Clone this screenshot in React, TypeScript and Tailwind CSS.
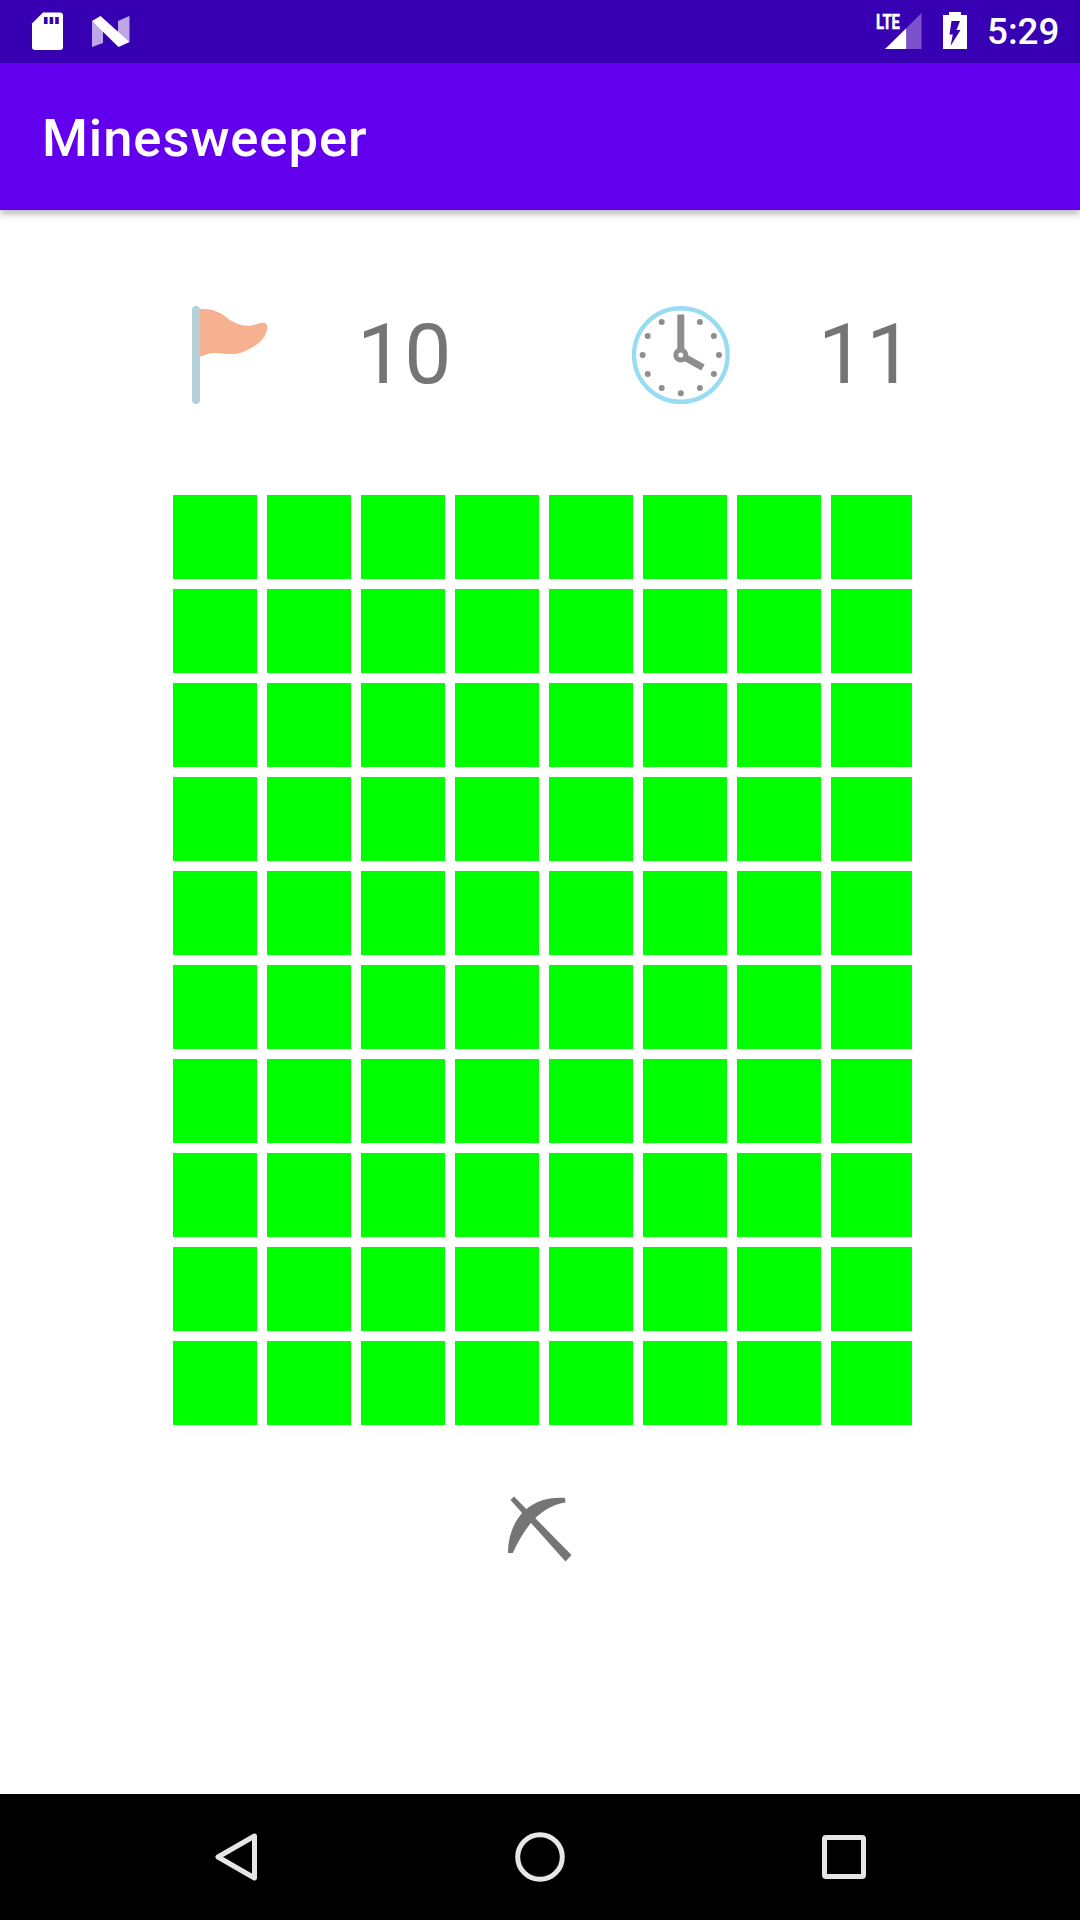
const rows = Array.from({ length: 10 });
const cols = Array.from({ length: 8 });

function Clock() {
  const dots = Array.from({ length: 12 }, (_, i) => i).filter((i) => i !== 0);
  return (
    <svg width="98" height="98" viewBox="632 306 98 98" className="block">
      <circle cx="680.8" cy="355" r="46.8" fill="none" stroke="#97dcf3" strokeWidth="4.4" />
      {dots.map((i) => {
        const a = (i * Math.PI) / 6;
        return <circle key={i} cx={680.8 + 38.2 * Math.sin(a)} cy={355 - 38.2 * Math.cos(a)} r="3" fill="#8e8e8e" />;
      })}
      <rect x="677.3" y="314.5" width="7" height="35" fill="#8e8e8e" />
      <path d="M685 357.5 L703 367.5" stroke="#8e8e8e" strokeWidth="7" />
      <circle cx="680.8" cy="355" r="5" fill="#fff" stroke="#8e8e8e" strokeWidth="5" />
    </svg>
  );
}

export default function App() {
  return (
    <div className="w-[1080px] h-[1920px] bg-white flex flex-col overflow-hidden font-['Roboto',sans-serif]">
      <div className="h-[63px] bg-[#3700b3] flex items-start shrink-0">
        <svg width="1080" height="63" viewBox="0 0 1080 63" className="block shrink-0">
          <path d="M43 12.5H60a3 3 0 0 1 3 3V47a3 3 0 0 1-3 3H35a3 3 0 0 1-3-3V23.5Z" fill="#fff" />
          <rect x="44" y="17" width="3.6" height="7" fill="#3700b3" />
          <rect x="49.6" y="17" width="3.6" height="7" fill="#3700b3" />
          <rect x="55.2" y="17" width="3.6" height="7" fill="#3700b3" />
          <path d="M92 21V47L103 43V30Z" fill="#bca6e6" />
          <path d="M118 21L129.5 16V42L118 36Z" fill="#bca6e6" />
          <path d="M92 21L100.5 16L129.5 42L118.5 47Z" fill="#fff" />
          <text x="876" y="29" fontFamily="Roboto" fontWeight="700" fontSize="20" fill="#fff" stroke="#fff" strokeWidth="0.5" textLength="24" lengthAdjust="spacingAndGlyphs">LTE</text>
          <path d="M885 49H906.5V28Z" fill="#fff" />
          <path d="M906.5 28L921.5 13V49H906.5Z" fill="#7c52cc" />
          <path d="M949 12H961V15H967V49H943V15H949Z" fill="#fff" />
          <path d="M951.5 21H960L956.5 30H960.5L950.5 46L952.8 34.5H949.5Z" fill="#3700b3" />
        </svg>
        <span className="-ml-[93px] text-[36.75px] leading-[63px] font-medium text-white whitespace-nowrap">5:29</span>
      </div>

      <div className="h-[147px] bg-[#6200ee] flex items-center pl-[42px] pt-[4px] shrink-0 shadow-[0_4px_7px_rgba(0,0,0,0.28)] z-10">
        <span className="text-[52.5px] tracking-[0.018em] leading-none font-medium text-white">Minesweeper</span>
      </div>

      <div className="flex items-center h-[98px] mt-[96px] pl-[190px] shrink-0">
        <svg width="80" height="98" viewBox="190 306 80 98" className="block shrink-0">
          <path d="M200 309C207 309 212 309.5 217 311.7C224 314.5 228 319 233 321.7C239 325 245 326 250 325.7C255 325 259 322.7 263 322.7C266.5 322.7 268 325 267.3 329C266 337 260 343 253 346.7C247 350.5 240 354 233 354C226 354.5 219 352.5 213 353C208 353.5 204 355 200 356.8Z" fill="#f6b190" />
          <rect x="192" y="306" width="8" height="98" rx="4" fill="#b6d0d8" />
        </svg>
        <span className="w-[362px] pl-[87px] text-[84px] leading-none text-[#757575] shrink-0">10</span>
        <div className="shrink-0"><Clock /></div>
        <span className="pl-[88px] text-[84px] tracking-[1px] leading-none text-[#757575] shrink-0">11</span>
      </div>

      <div className="grid grid-cols-[repeat(7,84px)_81px] auto-rows-[84px] gap-[10px] mt-[91px] ml-[173px] w-max shrink-0">
        {rows.map((_, r) => cols.map((_, c) => <div key={`${r}-${c}`} className="bg-[#00ff00]" />))}
      </div>

      <div className="flex justify-center mt-[71px] shrink-0">
        <svg width="66" height="68" viewBox="507 1496 66 68" className="block">
          <path d="M510.5 1500L514 1496.5L571.5 1555L565.5 1561.5Z" fill="#757575" />
          <path d="M508 1553C508 1522 528 1495 565 1498L565.5 1502.5C542 1506 526 1524 512.8 1553Z" fill="#757575" />
        </svg>
      </div>

      <div className="flex-1" />

      <div className="h-[126px] bg-black shrink-0">
        <svg width="1080" height="126" viewBox="0 1794 1080 126" className="block">
          <path d="M254.5 1836L218 1857L254.5 1878Z" fill="none" stroke="#e6e6e6" strokeWidth="5" strokeLinejoin="round" />
          <circle cx="540" cy="1857" r="22.3" fill="none" stroke="#e6e6e6" strokeWidth="5" />
          <rect x="824.5" y="1837.5" width="39" height="39" rx="1.5" fill="none" stroke="#e6e6e6" strokeWidth="5" />
        </svg>
      </div>
    </div>
  );
}
